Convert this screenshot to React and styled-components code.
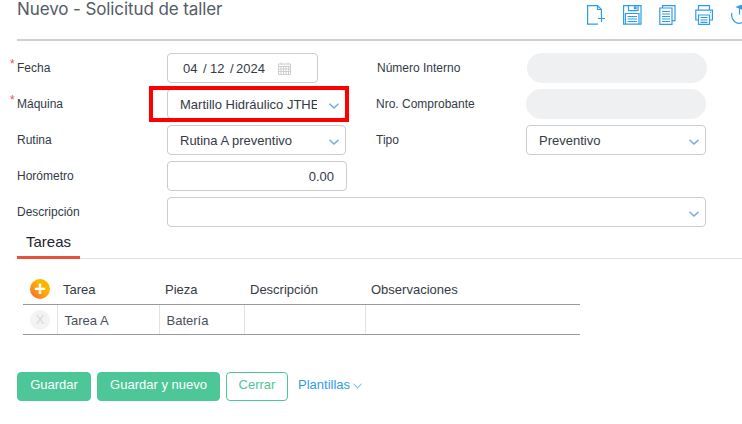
import React from 'react';
import styled, { createGlobalStyle } from 'styled-components';

const Global = createGlobalStyle`
  html, body { margin: 0; padding: 0; background: #fff; }
  body { width: 742px; height: 424px; overflow: hidden; font-family: "Liberation Sans", Arial, sans-serif; color: #343a46; }
`;

const Page = styled.div`
  width: 742px;
  height: 424px;
  overflow: hidden;
  padding-left: 17px;
  box-sizing: border-box;
`;

const Header = styled.header`
  height: 39px;
  display: flex;
  justify-content: space-between;
  align-items: flex-start;
  border-bottom: 2px solid #cfcfd4;
  overflow: hidden;
`;

const Title = styled.h1`
  margin: -1px 0 0;
  font: 400 17px/20px Inter, sans-serif;
  letter-spacing: -0.1px;
  color: #545b66;
`;

const Tools = styled.div`
  display: flex;
  flex: none;
  width: 164px;
  gap: 16px;
  padding-top: 5px;
  margin-right: -9px;
`;

const Tool = styled.svg`
  flex: none;
  width: 20px;
  height: 20px;
  fill: none;
  stroke: #2f9ceb;
  stroke-width: 1.2;
`;

const Form = styled.div`
  display: grid;
  grid-template-columns: 150px 180px 30px 149px 1fr;
  grid-auto-rows: 30px;
  row-gap: 6px;
  margin-top: 12px;
  width: 690px;
`;

const Label = styled.label`
  position: relative;
  align-self: center;
  grid-column: ${p => p.$column || 'auto'};
  font-size: 12px;
  line-height: 16px;
  color: #343a46;
  margin-left: ${p => p.$shift || 0}px;

  ${p => p.$required && `
    &::before {
      content: "*";
      position: absolute;
      left: -7px;
      top: -4px;
      color: #e8544f;
      font-size: 12px;
    }
  `}
`;

const Cell = styled.div`
  position: relative;
  grid-column: ${p => p.$span || 'auto'};
  margin-left: ${p => p.$shift || 0}px;
  width: ${p => p.$width ? `${p.$width}px` : 'auto'};
`;

const Field = styled.div`
  box-sizing: border-box;
  height: 30px;
  display: flex;
  align-items: center;
  padding: 0 6px 0 12px;
  border: 1px solid #ccc;
  border-radius: 4px;
  background: #fff;
  font-size: 13px;
  color: #343a46;
`;

const FieldText = styled.span`
  flex: 1;
  min-width: 0;
  white-space: nowrap;
  overflow: hidden;
  margin-right: 12px;
`;

const DateField = styled(Field)`
  padding-left: 15px;
`;

const DatePart = styled.span`
  width: ${p => p.$width}px;
  flex: none;
`;

const NumberField = styled(Field)`
  justify-content: flex-end;
  padding-right: 12px;
`;

const ReadOnly = styled.div`
  height: 30px;
  border-radius: 15px;
  background: #eff0f2;
`;

const Highlight = styled.div`
  position: absolute;
  left: -18px;
  right: -3px;
  top: -3px;
  bottom: -3px;
  border: 4px solid #f00;
  pointer-events: none;
`;

const Chevron = styled.svg`
  flex: none;
  width: ${p => p.$width || 10}px;
  height: 6px;
  fill: none;
  stroke: ${p => p.$color || '#74a9de'};
  stroke-width: ${p => p.$thin ? 1 : 1.4};
  margin-top: 3px;
`;

const Tabs = styled.div`
  height: 31px;
  border-bottom: 1px solid #e2e2e2;
  box-sizing: border-box;
  margin-top: 1px;
`;

const Tab = styled.div`
  box-sizing: border-box;
  width: 63px;
  height: 31px;
  padding: 5px 0 0 9px;
  font-size: 15px;
  line-height: 18px;
  color: #22262c;
  border-bottom: 3px solid #e8503a;
`;

const Table = styled.table`
  width: 557px;
  margin: 18px 0 0 6px;
  border-collapse: collapse;
  table-layout: fixed;
  font-size: 13px;
`;

const Th = styled.th`
  width: ${p => p.$width ? `${p.$width}px` : 'auto'};
  height: 25px;
  padding: 0 0 2px 6px;
  text-align: left;
  font-weight: 400;
  color: #343a46;
  border-bottom: 1px solid #9a9a9a;
`;

const Td = styled.td`
  height: 28px;
  padding: 1px 0 0 7px;
  color: #4a4f5a;
  border-bottom: 1px solid #9a9a9a;
  border-left: ${p => p.$first ? 'none' : '1px solid #e2e2e2'};
`;

const Round = styled.span`
  display: block;
  width: 20px;
  height: 20px;
  border-radius: 50%;
  text-align: center;
  line-height: 20px;
`;

const AddRound = styled(Round)`
  margin: -1px 0 1px 1px;
  background: linear-gradient(45deg, #f4623a, #ffb400 60%);
  color: #fff;
  font-size: 20px;
  font-weight: 700;
`;

const RemoveRound = styled(Round)`
  background: #f3f3f3;
  color: #d8d8d8;
  font-size: 13px;
`;

const Actions = styled.div`
  display: flex;
  align-items: center;
  gap: 6px;
  margin-top: 37px;
`;

const Button = styled.button`
  box-sizing: border-box;
  height: 29px;
  width: ${p => p.$width}px;
  padding: 0 0 4px;
  border: 1px solid #4dc797;
  border-radius: 4px;
  background: ${p => p.$outline ? '#fff' : '#4dc797'};
  color: ${p => p.$outline ? '#4dc797' : '#fff'};
  font: 13px "Liberation Sans", Arial, sans-serif;
`;

const LinkButton = styled.a`
  display: flex;
  align-items: center;
  gap: 3px;
  margin: -4px 0 0 4px;
  font-size: 13px;
  color: #2f9ceb;
`;

const Down = () => (
  <Chevron viewBox="0 0 10 6">
    <path d="M.5.7 5 5 9.5.7" />
  </Chevron>
);

export default function App() {
  return (
    <>
      <Global />
      <Page>
        <Header>
          <Title>Nuevo - Solicitud de taller</Title>
          <Tools>
            <Tool viewBox="0 0 20 20">
              <path d="M14.4 10V4.5L10.5.6H.6v18.6H11M10.5.6v3.9h3.9M11 13.5h7M14.5 10v7" />
            </Tool>
            <Tool viewBox="0 0 20 20">
              <path d="M.6.6h17.4v18.6H.6zM5.5.6v5h9.5v-5M11.5 2h1.5v1.6h-1.5zM2.5 8.5h13.5v10.7H2.5zM4.5 11.5h9.5M4.5 14h9.5M4.5 16.5h9.5" />
            </Tool>
            <Tool viewBox="0 0 20 20">
              <path d="M3.5 3V.6H16v15h-3M.8 3H13v16.4H.8zM3 6.5h8M3 9h8M3 11.5h8M3 14h8M3 16.5h8" />
            </Tool>
            <Tool viewBox="0 0 20 20">
              <path d="M3.5 5V.6h11V5M3.5 15H.8V5.2h16.6V15h-3M3.5 10h11v9.4h-11zM5.5 12.5h7M5.5 15h7M5.5 17.3h7M15 7.3h1" />
            </Tool>
            <Tool viewBox="0 0 20 20">
              <path d="M.8 8a7.5 8.5 0 0 0 10.5 9.5" />
              <path d="M8.5 3.5v6" />
              <path d="M6 2 11 0v4z" fill="#2f9ceb" />
            </Tool>
          </Tools>
        </Header>

        <Form>
          <Label $required>Fecha</Label>
          <Cell $width={151}>
            <DateField>
              <DatePart $width={20}>04</DatePart>
              <DatePart $width={7}>/</DatePart>
              <DatePart $width={20}>12</DatePart>
              <DatePart $width={6}>/</DatePart>
              <DatePart $width={42}>2024</DatePart>
              <svg width="13" height="13" viewBox="0 0 13 13" fill="none" stroke="#cfcfcf" strokeWidth="1">
                <path d="M.5 2h12v10.5H.5zM3 .5V3M10 .5V3M.5 4.5h12M.5 7h12M.5 9.5h12M3 4.5v8M5.5 4.5v8M8 4.5v8M10.5 4.5v8" />
              </svg>
            </DateField>
          </Cell>
          <Label $column={4}>Número Interno</Label>
          <Cell $shift={1} $width={180}><ReadOnly /></Cell>

          <Label $required>Máquina</Label>
          <Cell $width={179}>
            <Field>
              <FieldText>Martillo Hidráulico JTHE</FieldText>
              <Down />
            </Field>
            <Highlight />
          </Cell>
          <Label $column={4} $shift={-1}>Nro. Comprobante</Label>
          <Cell $width={180}><ReadOnly /></Cell>

          <Label>Rutina</Label>
          <Cell $width={179}>
            <Field>
              <FieldText>Rutina A preventivo</FieldText>
              <Down />
            </Field>
          </Cell>
          <Label $column={4} $shift={-1}>Tipo</Label>
          <Cell $width={180}>
            <Field>
              <FieldText>Preventivo</FieldText>
              <Down />
            </Field>
          </Cell>

          <Label>Horómetro</Label>
          <Cell $span="2 / 6" $width={180}>
            <NumberField>0.00</NumberField>
          </Cell>

          <Label>Descripción</Label>
          <Cell $span="2 / 6" $width={539}>
            <Field>
              <FieldText />
              <Down />
            </Field>
          </Cell>
        </Form>

        <Tabs>
          <Tab>Tareas</Tab>
        </Tabs>

        <Table>
          <thead>
            <tr>
              <Th $width={28}><AddRound>+</AddRound></Th>
              <Th $width={96}>Tarea</Th>
              <Th $width={79}>Pieza</Th>
              <Th $width={115}>Descripción</Th>
              <Th>Observaciones</Th>
            </tr>
          </thead>
          <tbody>
            <tr>
              <Td $first><RemoveRound>X</RemoveRound></Td>
              <Td>Tarea A</Td>
              <Td>Batería</Td>
              <Td />
              <Td />
            </tr>
          </tbody>
        </Table>

        <Actions>
          <Button $width={74}>Guardar</Button>
          <Button $width={123}>Guardar y nuevo</Button>
          <Button $width={62} $outline>Cerrar</Button>
          <LinkButton>
            Plantillas
            <Chevron viewBox="0 0 10 6" $width={9} $color="#2f9ceb" $thin>
              <path d="M.5.7 5 5 9.5.7" />
            </Chevron>
          </LinkButton>
        </Actions>
      </Page>
    </>
  );
}
